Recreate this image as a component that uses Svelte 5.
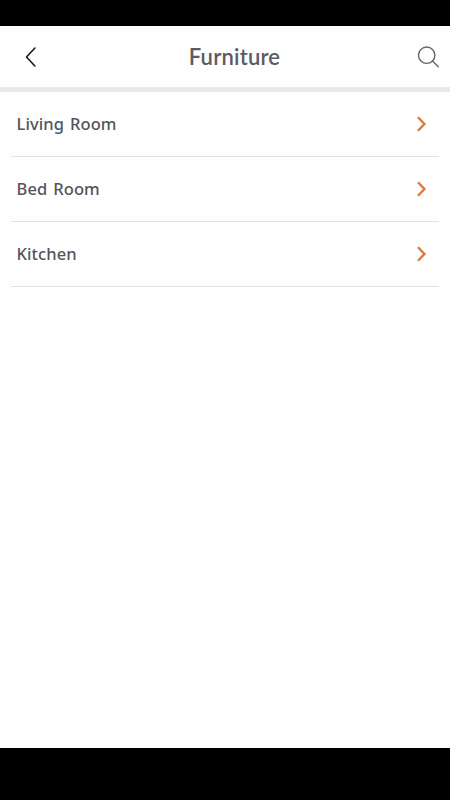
<script>
  const title = "Furniture";

  const categories = ["Living Room", "Bed Room", "Kitchen"];
</script>

<div class="screen">
  <main class="page">
    <header class="header">
      <button class="icon-btn" aria-label="Back">
        <svg width="12" height="22" viewBox="0 0 12 22">
          <path d="M9.9 2 L1.5 11 L9.9 20" />
        </svg>
      </button>
      <h1>{title}</h1>
      <button class="icon-btn search" aria-label="Search">
        <svg width="24" height="24" viewBox="0 0 24 24">
          <circle cx="10.7" cy="10.2" r="8.2" />
          <path d="M16.5 16 L22.3 21.7" />
        </svg>
      </button>
    </header>

    <ul class="list">
      {#each categories as name}
        <li>
          <span>{name}</span>
          <svg class="arrow" width="12" height="18" viewBox="0 0 12 18">
            <path d="M2 2.2 L8.4 9 L2 15.8" />
          </svg>
        </li>
      {/each}
    </ul>
  </main>
</div>

<style>
  :global(body) {
    background: #000;
  }

  .screen {
    box-sizing: border-box;
    height: 800px;
    padding: 26px 0 52px;
    background: #000;
  }

  .page {
    height: 722px;
    background: #fefefe;
  }

  .header {
    display: flex;
    align-items: center;
    justify-content: space-between;
    box-sizing: border-box;
    height: 66px;
    padding: 0 10px 0 25px;
    border-bottom: 5px solid #e9e9e9;
  }

  h1 {
    margin: 0 0 0 16px;
    color: #5b5b63;
    font-family: "Lato", sans-serif;
    font-size: 22px;
    font-weight: 600;
    letter-spacing: 0.2px;
    line-height: 30px;
  }

  .icon-btn {
    display: flex;
    padding: 0;
    border: 0;
    background: none;
  }

  svg {
    fill: none;
    stroke: #1a1a1a;
    stroke-width: 1.6;
    stroke-linecap: round;
    stroke-linejoin: round;
  }

  .search svg {
    stroke: #67676b;
    stroke-width: 1.4;
  }

  .list {
    margin: 0;
    padding: 0 11px;
    list-style: none;
  }

  li {
    display: flex;
    align-items: center;
    justify-content: space-between;
    box-sizing: border-box;
    height: 65px;
    padding: 0 11px 0 5.5px;
    border-bottom: 1px solid #e2e2e2;
    color: #54545c;
    font-family: "Noto Sans", sans-serif;
    font-size: 16.5px;
    font-weight: 500;
    letter-spacing: 0.1px;
    word-spacing: 1.5px;
  }

  li span {
    padding-bottom: 2px;
  }

  .arrow {
    stroke: #dc7a3c;
    stroke-width: 2.4;
    stroke-linecap: butt;
    stroke-linejoin: miter;
  }
</style>
